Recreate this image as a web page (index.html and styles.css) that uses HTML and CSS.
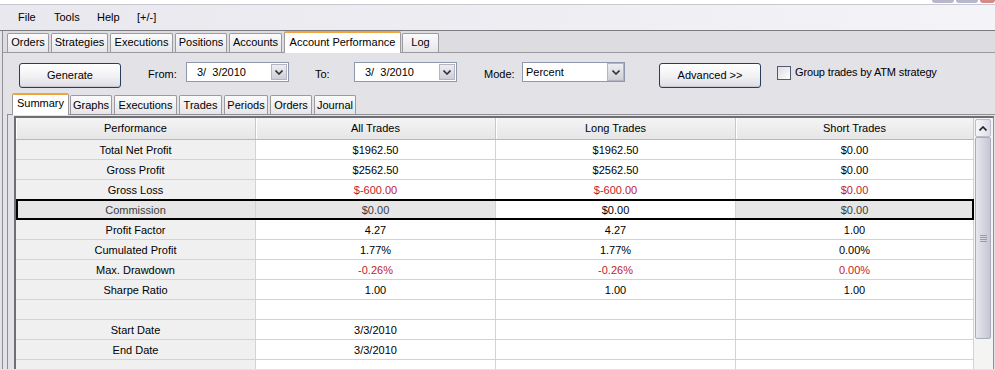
FILE: index.html
```html
<!DOCTYPE html>
<html>
<head>
<meta charset="utf-8">
<link rel="stylesheet" href="styles.css">
</head>
<body>
<div class="titlebar">
  <div class="caps"><span class="cap"></span><span class="cap"></span><span class="cap close"></span></div>
</div>
<div class="menubar">
  <span class="mi m-file">File</span><span class="mi m-tools">Tools</span><span class="mi m-help">Help</span><span class="mi">[+/-]</span>
</div>
<div class="main">
  <div class="tabstrip">
    <div class="tab t1">Orders</div>
    <div class="tab t2">Strategies</div>
    <div class="tab t3">Executions</div>
    <div class="tab t4">Positions</div>
    <div class="tab t5">Accounts</div>
    <div class="tab active t6">Account Performance</div>
    <div class="tab t7">Log</div>
  </div>
  <div class="page">
    <div class="toolbar">
      <div class="btn b-gen">Generate</div>
      <div class="lbl l-from">From:</div>
      <div class="combo date"><span class="ctext">3/ &nbsp;3/2010</span><span class="drop small"><svg width="8" height="5" viewBox="0 0 8 5"><polyline points="0.5,0.5 4,4 7.5,0.5" fill="none" stroke="#333" stroke-width="1.6"/></svg></span></div>
      <div class="lbl l-to">To:</div>
      <div class="combo date"><span class="ctext">3/ &nbsp;3/2010</span><span class="drop small"><svg width="8" height="5" viewBox="0 0 8 5"><polyline points="0.5,0.5 4,4 7.5,0.5" fill="none" stroke="#333" stroke-width="1.6"/></svg></span></div>
      <div class="lbl l-mode">Mode:</div>
      <div class="combo mode"><span class="ctext">Percent</span><span class="drop"><svg width="8" height="5" viewBox="0 0 8 5"><polyline points="0.5,0.5 4,4 7.5,0.5" fill="none" stroke="#333" stroke-width="1.6"/></svg></span></div>
      <div class="btn b-adv">Advanced &gt;&gt;</div>
      <div class="chk"></div>
      <div class="chklbl">Group trades by ATM strategy</div>
    </div>
    <div class="subtabs">
      <div class="stab active s1">Summary</div>
      <div class="stab s2">Graphs</div>
      <div class="stab s3">Executions</div>
      <div class="stab s4">Trades</div>
      <div class="stab s5">Periods</div>
      <div class="stab s6">Orders</div>
      <div class="stab s7">Journal</div>
    </div>
    <div class="subpanel">
      <div class="grid">
        <div class="rows">
          <div class="row head"><div class="c">Performance</div><div class="c">All Trades</div><div class="c">Long Trades</div><div class="c">Short Trades</div></div>
          <div class="row"><div class="c first">Total Net Profit</div><div class="c">$1962.50</div><div class="c">$1962.50</div><div class="c">$0.00</div></div>
          <div class="row"><div class="c first">Gross Profit</div><div class="c">$2562.50</div><div class="c">$2562.50</div><div class="c">$0.00</div></div>
          <div class="row"><div class="c first">Gross Loss</div><div class="c neg">$-600.00</div><div class="c neg">$-600.00</div><div class="c neg">$0.00</div></div>
          <div class="row sel"><div class="c first">Commission</div><div class="c">$0.00</div><div class="c cur">$0.00</div><div class="c">$0.00</div></div>
          <div class="row"><div class="c first">Profit Factor</div><div class="c">4.27</div><div class="c">4.27</div><div class="c">1.00</div></div>
          <div class="row"><div class="c first">Cumulated Profit</div><div class="c">1.77%</div><div class="c">1.77%</div><div class="c">0.00%</div></div>
          <div class="row"><div class="c first">Max. Drawdown</div><div class="c neg">-0.26%</div><div class="c neg">-0.26%</div><div class="c neg">0.00%</div></div>
          <div class="row"><div class="c first">Sharpe Ratio</div><div class="c">1.00</div><div class="c">1.00</div><div class="c">1.00</div></div>
          <div class="row"><div class="c first"></div><div class="c"></div><div class="c"></div><div class="c"></div></div>
          <div class="row"><div class="c first">Start Date</div><div class="c">3/3/2010</div><div class="c"></div><div class="c"></div></div>
          <div class="row"><div class="c first">End Date</div><div class="c">3/3/2010</div><div class="c"></div><div class="c"></div></div>
          <div class="row"><div class="c first"></div><div class="c"></div><div class="c"></div><div class="c"></div></div>
        </div>
        <div class="vscroll">
          <div class="sbtn"><svg width="8" height="5" viewBox="0 0 8 5"><polyline points="0.5,4.5 4,1 7.5,4.5" fill="none" stroke="#222" stroke-width="1.6"/></svg></div>
          <div class="thumb"><span class="grip"></span><span class="grip"></span><span class="grip"></span><span class="grip"></span></div>
          <div class="track"></div>
        </div>
      </div>
    </div>
  </div>
</div>
</body>
</html>
```

FILE: styles.css
```css
* { box-sizing: border-box; }
html, body { margin: 0; padding: 0; }
body {
  width: 995px;
  height: 370px;
  overflow: hidden;
  background: #e3e2e7;
  font-family: "Liberation Sans", Arial, sans-serif;
  font-size: 11px;
  color: #000;
}

/* title bar remnant */
.titlebar {
  height: 5px;
  background: #fff;
  border-bottom: 1px solid #c8c8ce;
  display: flex;
  justify-content: flex-end;
}
.caps { display: flex; gap: 2px; }
.cap {
  width: 22px;
  height: 3px;
  background: #b7b7cc;
  border-radius: 0 0 3px 3px;
}
.cap.close { width: 15px; background: #d58a8a; }

/* menu */
.menubar {
  height: 26px;
  background: linear-gradient(to right, #e8e8ee, #efeef3 60%, #f4f3f8);
  border-bottom: 1px solid #7c7c80;
  display: flex;
  align-items: center;
  padding-left: 18px;
  font-size: 11px;
  padding-bottom: 1px;
}
.mi { display: block; }
.m-file { width: 36px; }
.m-tools { width: 43px; }
.m-help { width: 40px; }

.main {
  margin-left: 2px;
  border-left: 1px solid #8f8f95;
}

/* top tabs */
.tabstrip {
  height: 22px;
  background: #dddce1;
  border-bottom: 1px solid #9a9a9e;
  display: flex;
  align-items: flex-end;
  padding-left: 4px;
}
.tab {
  height: 19px;
  line-height: 17px;
  text-align: center;
  border: 1px solid #9b9b9f;
  border-bottom: none;
  border-radius: 2px 2px 0 0;
  background: linear-gradient(#fbfbfc, #e6e6ea);
  margin-right: 2px;
  white-space: nowrap;
}
.tab.active {
  height: 22px;
  margin-bottom: -1px;
  background: #fff;
  border-top: 2px solid #f1a33c;
  line-height: 18px;
  margin-right: 1px;
}
.t1 { width: 42px; }
.t2 { width: 57px; }
.t3 { width: 63px; }
.t4 { width: 52px; }
.t5 { width: 53px; }
.t6 { width: 117px; }
.t7 { width: 37px; }

/* page */
.page { padding-top: 10px; }
.toolbar {
  height: 25px;
  display: flex;
  align-items: flex-start;
  padding-left: 16px;
}
.btn {
  height: 25px;
  line-height: 23px;
  text-align: center;
  border: 1px solid #2b3d5c;
  border-radius: 3px;
  background: linear-gradient(#ffffff, #f1f1f4 55%, #dcdce4);
  box-shadow: inset 0 -1px 0 #c9c9d3;
}
.b-gen { width: 102px; }
.b-adv { width: 102px; margin-left: 34px; }
.lbl {
  height: 20px;
  line-height: 20px;
  margin-top: 1px;
}
.l-from { width: 38px; margin-left: 27px; }
.l-to { width: 39px; margin-left: 26px; }
.l-mode { width: 38px; margin-left: 27px; }
.combo {
  height: 20px;
  margin-top: -1px;
  width: 103px;
  background: #fff;
  border: 1px solid #8e9aab;
  display: flex;
  align-items: stretch;
  justify-content: space-between;
}
.combo.date { padding: 1px; }
.ctext { line-height: 18px; padding-left: 3px; white-space: nowrap; }
.combo.date .ctext { padding-left: 9px; line-height: 16px; }
.drop {
  width: 17px;
  background: linear-gradient(#ececf1, #cfcfd8);
  border: 1px solid #b3b3c2;
  display: flex;
  align-items: center;
  justify-content: center;
}
.drop.small { width: 16px; }
.chk {
  width: 14px;
  height: 14px;
  margin-top: 3px;
  margin-left: 16px;
  border: 1px solid #4e5b70;
  background: linear-gradient(135deg, #dcdce2, #ffffff);
}
.chklbl { margin-left: 4px; line-height: 20px; margin-top: -1px; letter-spacing: -0.15px; }

/* sub tabs */
.subtabs {
  margin-top: 5px;
  margin-left: 4px;
  height: 22px;
  border-bottom: 1px solid #8e8e94;
  display: flex;
  align-items: flex-end;
  padding-left: 5px;
}
.stab {
  height: 19px;
  line-height: 18px;
  text-align: center;
  border: 1px solid #9b9b9f;
  border-bottom: none;
  border-radius: 2px 2px 0 0;
  background: linear-gradient(#fbfbfc, #e6e6ea);
  margin-right: 2px;
  white-space: nowrap;
}
.stab.active {
  height: 22px;
  margin-bottom: -1px;
  background: #fff;
  border-top: 2px solid #f1a33c;
  line-height: 17px;
  margin-right: 1px;
}
.s1 { width: 57px; }
.s2 { width: 42px; }
.s3 { width: 63px; }
.s4 { width: 43px; }
.s5 { width: 44px; }
.s6 { width: 42px; }
.s7 { width: 42px; }

.subpanel {
  margin-left: 4px;
  border-left: 1px solid #8e8e94;
  padding: 1px 0 0 6px;
  height: 254px;
  overflow: hidden;
}
.grid {
  width: 980px;
  border-top: 2px solid #6e6e74;
  border-left: 2px solid #6e6e74;
  border-right: 1px solid #8e8e94;
  display: flex;
  height: 253px;
  overflow: hidden;
  background: #fff;
}
.rows { width: 958px; }
.row {
  display: flex;
  height: 20px;
  border-bottom: 1px solid #d3d3d3;
}
.row.head {
  height: 22px;
  border-bottom: 1px solid #b8b8b8;
  background: linear-gradient(#f4f4f4, #e6e6e6);
}
.c {
  width: 240px;
  border-right: 1px solid #d3d3d3;
  text-align: center;
  line-height: 19px;
  padding-top: 1px;
  white-space: nowrap;
}
.c:last-child { width: 238px; }
.head .c { line-height: 21px; padding-top: 0; border-right-color: #c8c8c8; box-shadow: inset 1px 0 0 #fff; }
.c.first { background: #f0f0f0; }
.c.neg { color: #c3212a; }

.row.sel { position: relative; }
.row.sel .c { background: #e6e6e6; color: #3c3c3c; }
.row.sel .c.cur { background: #fff; color: #000; }
.row.sel::after {
  content: "";
  position: absolute;
  left: 0;
  right: 0;
  top: -1px;
  bottom: -1px;
  border: 2px solid #000;
  pointer-events: none;
}

/* scrollbar */
.vscroll {
  width: 19px;
  background: #f4f4f2;
  display: flex;
  flex-direction: column;
  padding: 1px 2px 0 1px;
}
.sbtn {
  height: 18px;
  flex: none;
  border: 1px solid #b9bccb;
  border-radius: 2px;
  background: linear-gradient(to right, #f6f6fa, #dcdce6);
  display: flex;
  align-items: center;
  justify-content: center;
}
.thumb {
  height: 202px;
  flex: none;
  border: 1px solid #a9acbb;
  border-radius: 2px;
  background: linear-gradient(to right, #e7e7ee, #d2d3de 60%, #c6c7d3);
  display: flex;
  flex-direction: column;
  align-items: center;
  justify-content: center;
  gap: 1px;
}
.grip {
  display: block;
  width: 7px;
  height: 1px;
  background: #9a9cab;
}
.track { flex: 1; }
```
